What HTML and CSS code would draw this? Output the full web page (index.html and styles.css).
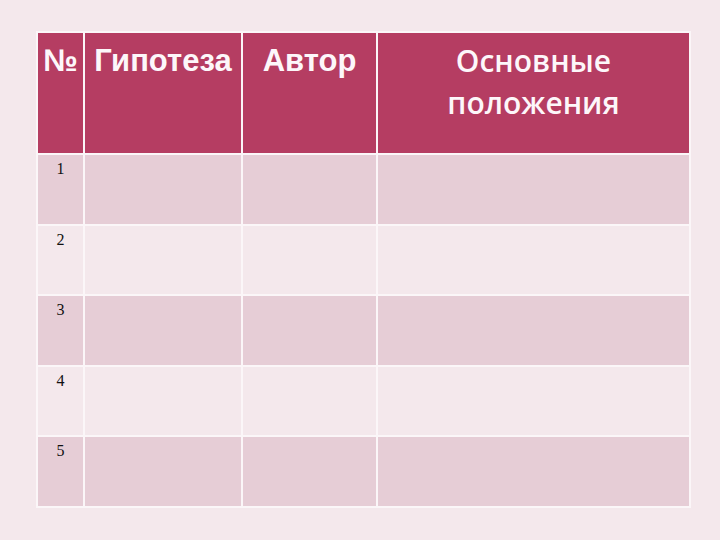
FILE: index.html
```html
<!DOCTYPE html>
<html lang="ru">
<head>
<meta charset="utf-8">
<link rel="stylesheet" href="styles.css">
</head>
<body>
<div class="page">
<table class="grid">
<colgroup>
<col class="c1"><col class="c2"><col class="c3"><col class="c4">
</colgroup>
<thead>
<tr>
<th class="h-arial">№</th>
<th class="h-arial">Гипотеза</th>
<th class="h-arial">Автор</th>
<th class="h-soft">Основные положения</th>
</tr>
</thead>
<tbody>
<tr class="odd"><td class="num">1</td><td></td><td></td><td></td></tr>
<tr class="even"><td class="num">2</td><td></td><td></td><td></td></tr>
<tr class="odd"><td class="num">3</td><td></td><td></td><td></td></tr>
<tr class="even"><td class="num">4</td><td></td><td></td><td></td></tr>
<tr class="odd"><td class="num">5</td><td></td><td></td><td></td></tr>
</tbody>
</table>
</div>
</body>
</html>
```

FILE: styles.css
```css
html, body {
  margin: 0;
  padding: 0;
  background: #f4e8ec;
  width: 720px;
  height: 540px;
  overflow: hidden;
}
.page {
  padding: 31px 0 0 36px;
}
.grid {
  border-collapse: collapse;
  table-layout: fixed;
  width: 653px;
}
.c1 { width: 47px; }
.c2 { width: 158px; }
.c3 { width: 135px; }
.c4 { width: 313px; }
.grid th, .grid td {
  border: 2px solid #fbf6f8;
  padding: 0;
}
.grid th {
  background: #b53d62;
  color: #fdf7fa;
  height: 122px;
  vertical-align: top;
  text-align: center;
  font-size: 31px;
  line-height: 42px;
  padding-top: 7px;
  box-sizing: border-box;
}
.h-arial {
  font-family: "Liberation Sans", Arial, sans-serif;
  font-weight: bold;
  white-space: nowrap;
}
.h-soft {
  font-family: "Open Sans", "Liberation Sans", sans-serif;
  font-weight: 600;
  font-size: 30px !important;
  padding: 5px 60px 0;
}
.grid td {
  height: 62.5px;
  vertical-align: top;
}
.odd td { background: #e6cdd6; }
.even td { background: #f4e8ec; }
.num {
  font-family: "Liberation Serif", "Times New Roman", serif;
  font-size: 16px;
  color: #111;
  text-align: center;
  padding-top: 6px !important;
  line-height: 16px;
}
```
